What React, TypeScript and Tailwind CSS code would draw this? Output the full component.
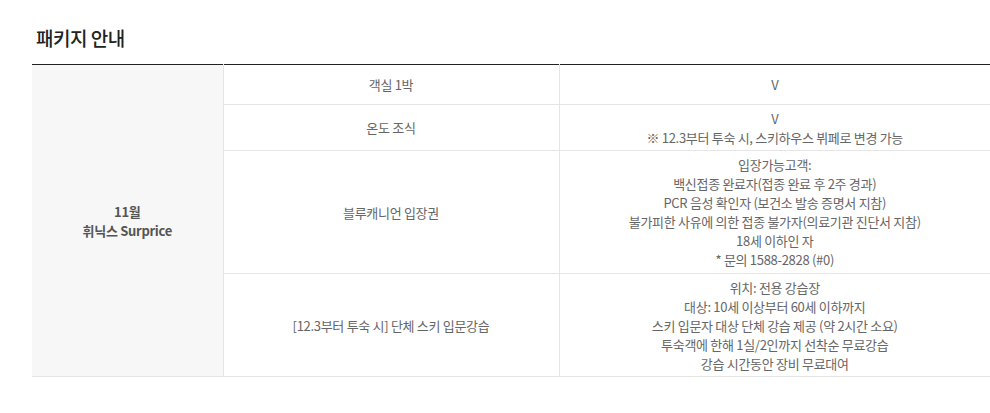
export default function App() {
  const font = "font-['Noto_Sans_CJK_KR','Noto_Sans',sans-serif]"
  const cell = 'border-b border-l border-[#e5e5e5] px-2 py-[3px] text-center align-middle leading-[19px]'
  return (
    <div className={`${font} bg-white w-[990px] h-[413px] overflow-hidden`}>
      <h2 className="pl-9 pt-[24px] text-[19px] font-medium text-[#222] leading-[28px] tracking-[-0.5px]">패키지 안내</h2>
      <table className="ml-8 mt-[12px] w-[958px] border-collapse border-t border-[#222] text-[13px] text-[#666] table-fixed tracking-[-0.3px]">
        <colgroup>
          <col className="w-[191px]" />
          <col className="w-[336px]" />
          <col />
        </colgroup>
        <tbody>
          <tr className="h-[40px]">
            <td rowSpan={4} className="border-b border-[#e5e5e5] bg-[#f7f7f7] text-center align-middle font-bold text-[#555] leading-[19px]">
              11월
              <br />
              휘닉스 Surprice
            </td>
            <td className={cell}>객실 1박</td>
            <td className={cell}>V</td>
          </tr>
          <tr className="h-[46px]">
            <td className={cell}>온도 조식</td>
            <td className={cell}>
              V
              <br />※ 12.3부터 투숙 시, 스키하우스 뷔페로 변경 가능
            </td>
          </tr>
          <tr className="h-[123px]">
            <td className={cell}>블루캐니언 입장권</td>
            <td className={cell}>
              입장가능고객:
              <br />백신접종 완료자(접종 완료 후 2주 경과)
              <br />PCR 음성 확인자 (보건소 발송 증명서 지참)
              <br />불가피한 사유에 의한 접종 불가자(의료기관 진단서 지참)
              <br />18세 이하인 자
              <br />* 문의 1588-2828 (#0)
            </td>
          </tr>
          <tr className="h-[103px]">
            <td className={cell}>[12.3부터 투숙 시] 단체 스키 입문강습</td>
            <td className={cell}>
              위치: 전용 강습장
              <br />대상: 10세 이상부터 60세 이하까지
              <br />스키 입문자 대상 단체 강습 제공 (약 2시간 소요)
              <br />투숙객에 한해 1실/2인까지 선착순 무료강습
              <br />강습 시간동안 장비 무료대여
            </td>
          </tr>
        </tbody>
      </table>
    </div>
  )
}
